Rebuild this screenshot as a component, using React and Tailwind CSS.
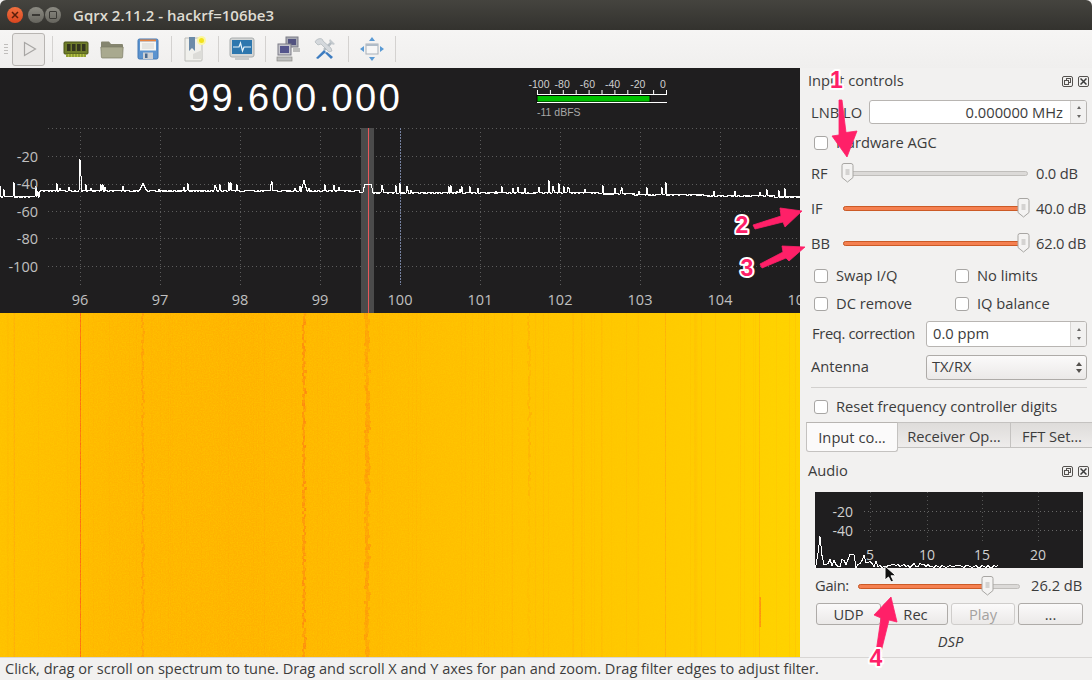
import React from "react";

// small seeded generator so the noisy drawings stay the same on every load
const rng = (seed) => () => {
  seed = (seed * 1664525 + 1013904223) >>> 0;
  return seed / 4294967296;
};

// [x, top y, half width] of the visible carriers on the spectrum trace
const specPeaks = [
  [0, 185, 1], [14, 182, 0], [36, 186, 1], [80, 159, 0], [81, 175, 0], [101, 184, 1], [105, 187, 1], [123, 186, 1],
  [143, 183, 4], [188, 183, 1], [231, 182, 1], [271, 184, 1], [272, 181, 1], [304, 180, 3], [400, 183, 1], [407, 186, 1],
  [451, 185, 1], [470, 186, 1], [518, 187, 1], [525, 188, 1], [549, 180, 0], [553, 186, 1], [559, 183, 0], [568, 187, 1],
  [603, 185, 1], [622, 187, 1], [647, 187, 1], [666, 182, 0], [662, 187, 1], [714, 191, 1], [735, 191, 1], [779, 190, 0],
];

const spectrumPoints = () => {
  const r = rng(7);
  const pts = [];
  for (let x = 0; x <= 800; x += 1) {
    const base = x < 40 ? 197 : x < 360 ? 191 : x < 600 ? 193 : 194 + (x - 600) / 70;
    let y = base - Math.round(r() * 1.4);
    if (r() > 0.94) y -= 2 + Math.round(r() * 6);
    specPeaks.forEach(([px, py, w]) => {
      const d = Math.abs(x - px);
      if (d <= w) y = Math.min(y, py + (w ? (d / w) * (base - py) : 0));
    });
    if (x >= 365 && x <= 371) y = 184;
    if (x === 364 || x === 372) y = 187;
    pts.push(`${x},${Math.round(y) + 0.5}`);
  }
  return pts.join(" ");
};

const audioPoints = () => {
  const r = rng(21);
  const pts = ["0,76"];
  for (let x = 1; x < 185; x += 2) {
    const top = x < 62 ? 9 : x < 115 ? 4 : 2.5;
    let h = r() * top;
    if (x === 3) h = 14;
    if (x === 5) h = 31;
    if (x === 7) h = 12;
    if (x >= 35 && x <= 39) h = 13;
    if (x === 49) h = 12;
    if (x > 165 && r() > 0.4) h = 0;
    pts.push(`${x},${Math.round(75 - h) + 0.5}`);
  }
  return pts.join(" ");
};

const waterfall = (() => {
  const r = rng(99);
  const faint = [];
  for (let i = 0; i < 90; i++) {
    const x = Math.floor(r() * 800);
    faint.push({ x, o: 0.05 + r() * (x > 500 ? 0.16 : 0.07) });
  }
  const jitter = [];
  [
    [143, 2, 0.5],
    [304, 2.5, 0.85],
    [367, 4, 0.55],
    [529, 2, 0.25],
  ].forEach(([cx, w, o]) => {
    for (let y = 0; y < 344; y += 3) {
      const fade = cx === 529 && y > 180 ? 0.3 : 1;
      jitter.push({ x: cx + (r() - 0.5) * 2 - w / 2, y, w: w * (0.7 + r() * 0.6), o: o * (0.6 + r() * 0.5) * fade });
    }
  });
  return { faint, jitter };
})();

const DOT = "1 3";

function Spectrum() {
  const hLines = [128.5, 156.5, 184.5, 211.5, 238.5, 266.5];
  const yLabels = [["-20", 157], ["-40", 184], ["-60", 212], ["-80", 239], ["-100", 267]];
  const xLabels = [96, 97, 98, 99, 100, 101, 102, 103, 104, 105];
  return (
    <div className="relative h-[245px] bg-[#1f1e1f]">
      <svg width="800" height="245" viewBox="0 68 800 245" className="block">
        {hLines.map((y) => (
          <line key={y} x1="48" x2="800" y1={y} y2={y} stroke="#5c5c5c" strokeDasharray={DOT} />
        ))}
        {xLabels.map((v, i) => (
          <line key={v} x1={80.5 + i * 80} x2={80.5 + i * 80} y1="128" y2="285" stroke={v === 100 ? "#75819f" : "#5c5c5c"} strokeDasharray={v === 100 ? "2 1" : DOT} />
        ))}
        <rect x="361" y="128" width="13" height="185" fill="#4b4b4b" />
        <line x1="368.5" x2="368.5" y1="128" y2="313" stroke="#e8575a" />
        <polyline points={spectrumPoints()} fill="none" stroke="#ffffff" strokeWidth="1" shapeRendering="crispEdges" />
        {yLabels.map(([t, y]) => (
          <text key={t} x="38" y={y + 5} textAnchor="end" fontSize="14.5" fill="#c0c0c0" fontFamily="Open Sans, sans-serif">{t}</text>
        ))}
        {xLabels.map((v, i) => (
          <text key={v} x={80 + i * 80} y="305" textAnchor="middle" fontSize="14.5" fill="#c0c0c0" fontFamily="Open Sans, sans-serif">{v}</text>
        ))}
      </svg>
      <div className="absolute left-[188px] top-[8px] font-['Liberation_Sans',sans-serif] text-[38px] leading-[44px] tracking-[2.4px] text-white">99.600.000</div>
      <svg width="150" height="52" viewBox="525 72 150 52" className="absolute left-[525px] top-[4px]">
        {["-100", "-80", "-60", "-40", "-20", "0"].map((t, i) => (
          <text key={t} x={537 + i * 25.2 + (i === 0 ? 2 : 0)} y="88" textAnchor="middle" fontSize="10.5" fill="#d0d0d0" fontFamily="Liberation Sans, sans-serif">{t}</text>
        ))}
        {Array.from({ length: 11 }, (_, i) => (
          <line key={i} x1={537.5 + i * 12.9} x2={537.5 + i * 12.9} y1="90" y2="94" stroke="#fff" />
        ))}
        <line x1="537" x2="667" y1="94.5" y2="94.5" stroke="#fff" />
        <rect x="537" y="95.5" width="113" height="6.5" fill="#00c000" stroke="#000" />
        <line x1="537" x2="667" y1="102.5" y2="102.5" stroke="#fff" />
        <text x="537" y="116" fontSize="10.5" fill="#a8a8a8" fontFamily="Liberation Sans, sans-serif">-11 dBFS</text>
      </svg>
    </div>
  );
}

function Waterfall() {
  return (
    <svg width="800" height="344" viewBox="0 0 800 344" className="block" shapeRendering="crispEdges">
      <defs>
        <linearGradient id="wf" x1="0" x2="1" y1="0" y2="0">
          <stop offset="0" stopColor="#ffc000" />
          <stop offset="0.08" stopColor="#ffbc00" />
          <stop offset="0.14" stopColor="#ffb600" />
          <stop offset="0.3" stopColor="#ffb200" />
          <stop offset="0.45" stopColor="#ffb800" />
          <stop offset="0.6" stopColor="#ffc000" />
          <stop offset="0.8" stopColor="#ffc800" />
          <stop offset="1" stopColor="#ffd400" />
        </linearGradient>
        <filter id="wfnoise" x="0" y="0" width="100%" height="100%">
          <feTurbulence type="fractalNoise" baseFrequency="0.75" numOctaves="2" seed="4" />
          <feColorMatrix values="0 0 0 0 1  0 0 0 0 0.62  0 0 0 0 0  1.4 0 0 0 -0.45" />
        </filter>
      </defs>
      <rect width="800" height="344" fill="url(#wf)" />
      {waterfall.faint.map((s, i) => (
        <rect key={i} x={s.x} y="0" width="1" height="344" fill="#ff9a10" opacity={s.o} />
      ))}
      {waterfall.jitter.map((s, i) => (
        <rect key={i} x={s.x} y={s.y} width={s.w} height="3" fill="#ff8410" opacity={s.o} />
      ))}
      <rect x="80" y="0" width="1" height="344" fill="#ff6a12" />
      <rect x="14" y="0" width="1" height="344" fill="#ffa410" opacity="0.6" />
      <rect x="665" y="0" width="1" height="344" fill="#ff9c10" opacity="0.6" />
      <rect x="759" y="284" width="2" height="30" fill="#ff9010" />
      <rect x="759" y="0" width="1" height="344" fill="#ffa410" opacity="0.5" />
      <rect width="800" height="344" filter="url(#wfnoise)" opacity="0.6" />
    </svg>
  );
}

function WinBtn({ bg, children }) {
  return (
    <div className={`flex h-[16px] w-[16px] items-center justify-center rounded-full ${bg}`}>{children}</div>
  );
}

function TitleBar() {
  return (
    <div className="flex h-[30px] shrink-0 items-center rounded-t-[6px] bg-gradient-to-b from-[#45443f] to-[#33322e] pl-[7px]">
      <WinBtn bg="bg-gradient-to-b from-[#f0703f] to-[#d9451f]">
        <svg width="8" height="8" viewBox="0 0 8 8"><path d="M1 1l6 6M7 1l-6 6" stroke="#5a1f0a" strokeWidth="1.5" /></svg>
      </WinBtn>
      <div className="ml-[5px]">
        <WinBtn bg="bg-gradient-to-b from-[#8c8b83] to-[#66655e]">
          <div className="h-[2px] w-[8px] bg-[#3a3935]" />
        </WinBtn>
      </div>
      <div className="ml-[1px]">
        <WinBtn bg="bg-gradient-to-b from-[#8c8b83] to-[#66655e]">
          <div className="h-[8px] w-[8px] rounded-[1px] border-[1.5px] border-[#3a3935]" />
        </WinBtn>
      </div>
      <div className="ml-[12px] font-['Open_Sans',sans-serif] text-[15px] font-semibold text-[#dfdbd2]">Gqrx 2.11.2 - hackrf=106be3</div>
    </div>
  );
}

const ChipIcon = () => (
  <svg width="26" height="20" viewBox="0 0 26 20">
    <rect x="1" y="3" width="24" height="12" rx="1" fill="#6f7d2a" stroke="#4a5518" />
    {[4, 9, 14, 19].map((x) => (
      <rect key={x} x={x} y="5" width="3.5" height="7" fill="#33351e" />
    ))}
    <rect x="3" y="15" width="20" height="3" fill="#b4c244" />
    <path d="M4 15v3M7 15v3M10 15v3M13 15v3M16 15v3M19 15v3M22 15v3" stroke="#6f7d2a" />
  </svg>
);
const FolderIcon = () => (
  <svg width="24" height="20" viewBox="0 0 24 20">
    <path d="M1 3.5a1 1 0 011-1h7l2 2.5h11a1 1 0 011 1V9H1z" fill="#85856f" />
    <path d="M0.8 8h22.4l-.6 10a1 1 0 01-1 1H2.4a1 1 0 01-1-1z" fill="#a9a98f" stroke="#7c7c66" strokeWidth=".7" />
  </svg>
);
const SaveIcon = () => (
  <svg width="22" height="22" viewBox="0 0 22 22">
    <rect x="1" y="1" width="20" height="20" rx="1.5" fill="#5b93cf" stroke="#4479b4" />
    <rect x="3" y="1.5" width="16" height="2" fill="#e8843f" />
    <rect x="3" y="3.5" width="16" height="9" fill="#f6f6f2" />
    <path d="M5 6h12M5 8h12M5 10h12" stroke="#d4d4d0" />
    <rect x="6" y="14.5" width="10" height="6.5" fill="#cdd0d4" />
    <rect x="8" y="15.5" width="2.5" height="4.5" fill="#4a6a90" />
  </svg>
);
const BookmarkIcon = () => (
  <svg width="24" height="26" viewBox="0 0 24 26">
    <path d="M2 2h16a1 1 0 011 1v21a1 1 0 01-1 1H2z" fill="#f0f0ec" stroke="#bcbcb8" />
    <path d="M6 1h6v14l-3-3-3 3z" fill="#6b8aa8" />
    <path d="M10 18l9-4v9h-9z" fill="#dcdcd8" />
    <circle cx="18.5" cy="4.5" r="4.5" fill="#fbf6a0" />
    <circle cx="18.5" cy="4.5" r="2.5" fill="#f2e21c" />
  </svg>
);
const MonitorIcon = () => (
  <svg width="26" height="24" viewBox="0 0 26 24">
    <rect x="1" y="1" width="24" height="19" rx="2" fill="#d4d6d6" stroke="#a8acac" />
    <rect x="3" y="3" width="20" height="14" fill="#2d77ae" />
    <path d="M4 10h6l1.5-4 2 8 1.5-4h7" stroke="#e8f4fa" fill="none" strokeWidth="1.2" />
    <rect x="6" y="20" width="14" height="3" fill="#c8caca" />
  </svg>
);
const NetworkIcon = () => (
  <svg width="26" height="26" viewBox="0 0 26 26">
    <rect x="10" y="1" width="12" height="10" fill="#a8aab4" stroke="#7c7c86" />
    <rect x="12" y="3" width="8" height="6" fill="#525280" />
    <rect x="17" y="12" width="7" height="4" fill="#bcbcbc" />
    <rect x="2" y="8" width="13" height="11" fill="#c4c4cc" stroke="#7c7c86" />
    <rect x="4" y="10" width="9" height="7" fill="#54548c" />
    <rect x="1" y="21" width="15" height="4" fill="#bcbcbc" stroke="#8c8c88" strokeWidth=".7" />
  </svg>
);
const ToolsIcon = () => (
  <svg width="22" height="22" viewBox="0 0 22 22">
    <path d="M10 12L18 4" stroke="#b4bcc2" strokeWidth="2.5" />
    <path d="M16 1l5 5-2 1-4-4z" fill="#c4cace" />
    <path d="M2 20l8-8 2 2-8 7z" fill="#3d7cc0" />
    <path d="M4 1a5 5 0 00-3 3l3 3 3-1 8 8 3-1-1-3-8-7c0-2-2-3-5-2z" fill="#d4d8dc" stroke="#a4acb2" strokeWidth=".6" />
    <path d="M13 14l6 5-2 2-6-6z" fill="#3d7cc0" />
  </svg>
);
const ArrowsIcon = () => (
  <svg width="24" height="24" viewBox="0 0 24 24">
    <rect x="6" y="7" width="12" height="10" fill="#f6f6f6" stroke="#a8b0b8" />
    <rect x="6" y="7" width="12" height="2" fill="#b0bcc8" />
    <path d="M12 0l3 4H9zM12 24l-3-4h6zM0 12l4-3v6zM24 12l-4 3V9z" fill="#5a9ad4" />
  </svg>
);

function Tb({ children }) {
  return <div className="flex h-full w-9 items-center justify-center">{children}</div>;
}
const Sep = () => <div className="mx-[5px] h-[26px] w-px bg-[#d4d2d0]" />;

function Toolbar() {
  return (
    <div className="flex h-[38px] shrink-0 items-center bg-gradient-to-b from-[#f6f5f4] to-[#f0efee] pl-[4px]">
      <div className="flex w-[4px] flex-col gap-[2px]">
        <div className="h-px bg-[#c0bebc]" />
        <div className="h-px bg-[#c0bebc]" />
        <div className="h-px bg-[#c0bebc]" />
        <div className="h-px bg-[#c0bebc]" />
      </div>
      <div className="ml-[4px] flex h-[33px] w-[33px] items-center justify-center rounded-[3px] border border-[#b8b5b2] bg-[#ebe9e7]">
        <svg width="14" height="16" viewBox="0 0 14 16" className="ml-[2px]"><path d="M1.5 1.5L12.5 8 1.5 14.5z" fill="none" stroke="#a8a6a4" strokeWidth="1.2" /></svg>
      </div>
      <div className="ml-[7px]" />
      <div className="mx-0 h-[26px] w-px bg-[#d4d2d0]" />
      <div className="w-[5px]" />
      <Tb><ChipIcon /></Tb>
      <Tb><FolderIcon /></Tb>
      <Tb><SaveIcon /></Tb>
      <Sep />
      <Tb><BookmarkIcon /></Tb>
      <Sep />
      <Tb><MonitorIcon /></Tb>
      <Sep />
      <Tb><NetworkIcon /></Tb>
      <Tb><ToolsIcon /></Tb>
      <Sep />
      <Tb><ArrowsIcon /></Tb>
      <Sep />
    </div>
  );
}

function DockHeader({ title }) {
  return (
    <div className="flex h-full items-center justify-between pl-[8px] pr-[4px]">
      <span className="mb-[2px]">{title}</span>
      <div className="flex gap-[5px]">
        <div className="relative h-[11px] w-[11px] rounded-[2px] border border-[#55524f]">
          <div className="absolute left-[3px] top-[1px] h-[5px] w-[5px] border border-[#55524f]" />
          <div className="absolute left-[1px] top-[3px] h-[5px] w-[5px] border border-[#55524f] bg-[#f2f1f0]" />
        </div>
        <div className="flex h-[11px] w-[11px] items-center justify-center rounded-[2px] border border-[#55524f]">
          <svg width="7" height="7" viewBox="0 0 7 7"><path d="M.5.5l6 6M6.5.5l-6 6" stroke="#3c3c3c" strokeWidth="1.5" /></svg>
        </div>
      </div>
    </div>
  );
}

function SpinArrows() {
  return (
    <div className="flex w-[16px] flex-col items-center justify-center gap-[6px] border-l border-[#d8d6d4] bg-[#f2f1f0]">
      <div className="h-0 w-0 border-x-[2.5px] border-b-[3px] border-x-transparent border-b-[#6a6866]" />
      <div className="h-0 w-0 border-x-[2.5px] border-t-[3px] border-x-transparent border-t-[#6a6866]" />
    </div>
  );
}

function Check({ label }) {
  return (
    <div className="flex items-center">
      <div className="h-[14px] w-[14px] rounded-[3px] border border-[#a8a6a4] bg-white" />
      <span className="mb-[2px] ml-[8px] whitespace-nowrap">{label}</span>
    </div>
  );
}

function Slider({ width, value }) {
  return (
    <div className="relative h-[20px]" style={{ width }}>
      <div className="absolute inset-x-0 top-[8px] h-[5px] rounded-full border border-[#c0bebb] bg-[#dcdad8]" />
      {value > 0 && (
        <div className="absolute left-0 top-[8px] h-[5px] rounded-full border border-[#cc5a26] bg-[#f58050]" style={{ width: value }} />
      )}
      <svg width="13" height="20" viewBox="0 0 13 20" className="absolute top-0" style={{ left: value > 0 ? value - 6 : -2 }}>
        <path d="M1 2.5a2 2 0 012-2h7a2 2 0 012 2v12L6.5 19 1 14.5z" fill="#f4f3f2" stroke="#a8a6a3" />
        <path d="M4.5 7h4M4.5 9h4M4.5 11h4" stroke="#b4b2b0" />
      </svg>
    </div>
  );
}

function SliderRow({ label, value, text, cls }) {
  return (
    <div className={`flex items-center pl-[11px] ${cls}`}>
      <span className="w-[32px]">{label}</span>
      <Slider width={185} value={value} />
      <span className="ml-[8px] whitespace-nowrap tracking-[-0.2px]">{text}</span>
    </div>
  );
}

function Btn({ children, disabled, cls }) {
  return (
    <button className={`flex h-[22px] items-center justify-center rounded-[3px] border bg-gradient-to-b from-[#fbfafa] to-[#ebe9e8] ${disabled ? "border-[#cfcdcb] text-[#a4a2a0]" : "border-[#aeaba8]"} ${cls}`}>{children}</button>
  );
}

function AudioPlot() {
  const vx = [55, 112, 167, 223];
  return (
    <svg width="268" height="76" viewBox="0 0 268 76" className="ml-[15px] block bg-[#1f1e1f]">
      {[19.5, 38.5].map((y) => (
        <line key={y} x1="49" x2="268" y1={y} y2={y} stroke="#666" strokeDasharray={DOT} />
      ))}
      {vx.map((x) => (
        <line key={x} x1={x + 0.5} x2={x + 0.5} y1="0" y2="52" stroke="#555" strokeDasharray={DOT} />
      ))}
      <text x="38" y="25" textAnchor="end" fontSize="14" fill="#d0d0d0" fontFamily="Open Sans, sans-serif">-20</text>
      <text x="38" y="44" textAnchor="end" fontSize="14" fill="#d0d0d0" fontFamily="Open Sans, sans-serif">-40</text>
      {["5", "10", "15", "20"].map((t, i) => (
        <text key={t} x={vx[i]} y="68" textAnchor="middle" fontSize="14" fill="#d0d0d0" fontFamily="Open Sans, sans-serif">{t}</text>
      ))}
      <polyline points={audioPoints()} fill="none" stroke="#fff" strokeWidth="1" shapeRendering="crispEdges" />
    </svg>
  );
}

function SidePanel() {
  return (
    <div className="flex flex-1 flex-col text-[14.7px] text-[#3c3c3c]">
      <div className="h-[26px]"><DockHeader title="Input controls" /></div>
      <div className="flex h-[36px] items-center pl-[11px] pr-[6px]">
        <span className="w-[58px] whitespace-nowrap">LNB LO</span>
        <div className="flex h-[24px] flex-1 overflow-hidden rounded-[3px] border border-[#b8b5b2] bg-white">
          <div className="flex-1 pr-[7px] text-right leading-[22px]">0.000000 MHz</div>
          <SpinArrows />
        </div>
      </div>
      <div className="flex h-[26px] items-center pl-[14px]"><Check label="Hardware AGC" /></div>
      <SliderRow label="RF" value={0} text="0.0 dB" cls="h-[34px]" />
      <SliderRow label="IF" value={180} text="40.0 dB" cls="h-[36px]" />
      <SliderRow label="BB" value={180} text="62.0 dB" cls="h-[34px]" />
      <div className="grid h-[32px] grid-cols-[141px_1fr] items-center pl-[14px]">
        <Check label="Swap I/Q" />
        <Check label="No limits" />
      </div>
      <div className="grid h-[24px] grid-cols-[141px_1fr] items-center pl-[14px]">
        <Check label="DC remove" />
        <Check label="IQ balance" />
      </div>
      <div className="flex h-[36px] items-center pl-[12px] pr-[6px]">
        <span className="mb-[2px] w-[114px] whitespace-nowrap tracking-[-0.35px]">Freq. correction</span>
        <div className="flex h-[26px] flex-1 overflow-hidden rounded-[3px] border border-[#b8b5b2] bg-white">
          <div className="flex-1 pl-[6px] leading-[23px]">0.0 ppm</div>
          <SpinArrows />
        </div>
      </div>
      <div className="flex h-[30px] items-center pl-[11px] pr-[6px]">
        <span className="mb-[2px] w-[115px]">Antenna</span>
        <div className="flex h-[25px] flex-1 items-center justify-between rounded-[3px] border border-[#aeaba8] bg-gradient-to-b from-[#fbfafa] to-[#ebe9e8] pl-[5px] pr-[4px]">
          <span className="mb-[2px]">TX/RX</span>
          <div className="flex flex-col gap-[3px]">
            <div className="h-0 w-0 border-x-[3px] border-b-[4px] border-x-transparent border-b-[#55524f]" />
            <div className="h-0 w-0 border-x-[3px] border-t-[4px] border-x-transparent border-t-[#55524f]" />
          </div>
        </div>
      </div>
      <div className="flex h-[10px] items-center pl-[11px] pr-[6px]"><div className="h-px w-full bg-[#d2d0ce]" /></div>
      <div className="flex h-[30px] items-center pl-[14px]"><Check label="Reset frequency controller digits" /></div>
      <div className="flex h-[30px] items-start pl-[6px]">
        <div className="flex h-[30px] w-[92px] items-center justify-center rounded-b-[3px] border border-[#c4c2c0] border-t-[#b8b5b2] bg-[#fbfafa]">Input co…</div>
        <div className="flex h-[26px] w-[113px] items-center justify-center border-y border-r border-[#c4c2c0] bg-gradient-to-b from-[#dedcda] to-[#eeeceb] pt-[2px]">Receiver Op…</div>
        <div className="flex h-[26px] flex-1 items-center justify-center border-y border-[#c4c2c0] bg-gradient-to-b from-[#dedcda] to-[#eeeceb] pt-[2px]">FFT Set…</div>
      </div>
      <div className="h-[38px]"><DockHeader title="Audio" /></div>
      <div className="pt-[2px]"><AudioPlot /></div>
      <div className="flex h-[35px] items-center pl-[15px]">
        <span className="w-[43px] tracking-[-0.3px]">Gain:</span>
        <Slider width={162} value={129} />
        <span className="ml-[11px] whitespace-nowrap">26.2 dB</span>
      </div>
      <div className="flex h-[22px] pl-[16px] pr-[10px]">
        <Btn cls="w-[65px]">UDP</Btn>
        <Btn cls="ml-[2px] w-[65px]">Rec</Btn>
        <Btn cls="ml-[3px] w-[64px]" disabled>Play</Btn>
        <Btn cls="ml-[3px] w-[65px]">...</Btn>
      </div>
      <div className="flex h-[32px] items-center justify-center pl-[8px] italic">DSP</div>
    </div>
  );
}

function Annotations() {
  const pink = "#ff2068";
  const nums = [
    ["1", 836.5, 88],
    ["2", 742, 233],
    ["3", 747, 276],
    ["4", 876, 666],
  ];
  return (
    <svg width="1092" height="680" viewBox="0 0 1092 680" className="pointer-events-none absolute left-0 top-0">
      <g fill={pink} stroke={pink} strokeWidth=".8" strokeLinejoin="round">
        <path d="M839 100L842 100L846 132.5L857 131L847 157L832 136L839 135z" />
        <path d="M753 225L781 216L780 208L802 211L785 227L783 222L755 229z" />
        <path d="M760 264L783 252L782 246L805 247L789 261L786 258L762 268z" />
        <path d="M876 652L881 618L874 615L891 597L897 622L889 620L881 652z" />
      </g>
      {nums.map(([t, x, y]) => (
        <text key={t} x={x} y={y} textAnchor="middle" fontSize="23" fontWeight="700" fill={pink} stroke="#fff" strokeWidth="4" strokeLinejoin="round" fontFamily="Liberation Sans, sans-serif" className="[paint-order:stroke]">{t}</text>
      ))}
      <path d="M885 566v14l3.5-3 2.5 5 2.5-1.2-2.5-5H896z" fill="#111" stroke="#fff" />
    </svg>
  );
}

export default function App() {
  return (
    <div className="relative flex h-[680px] w-[1092px] flex-col overflow-hidden bg-[#f2f1f0] font-['Open_Sans',sans-serif]">
      <TitleBar />
      <Toolbar />
      <div className="flex h-[589px]">
        <div className="w-[800px] shrink-0 border-b border-black">
          <Spectrum />
          <Waterfall />
        </div>
        <SidePanel />
      </div>
      <div className="relative flex-1 border-t border-[#d8d6d4] pl-[5px] text-[14.55px] leading-[21px] text-[#3c3c3c]">
        Click, drag or scroll on spectrum to tune. Drag and scroll X and Y axes for pan and zoom. Drag filter edges to adjust filter.
      </div>
      <Annotations />
    </div>
  );
}
